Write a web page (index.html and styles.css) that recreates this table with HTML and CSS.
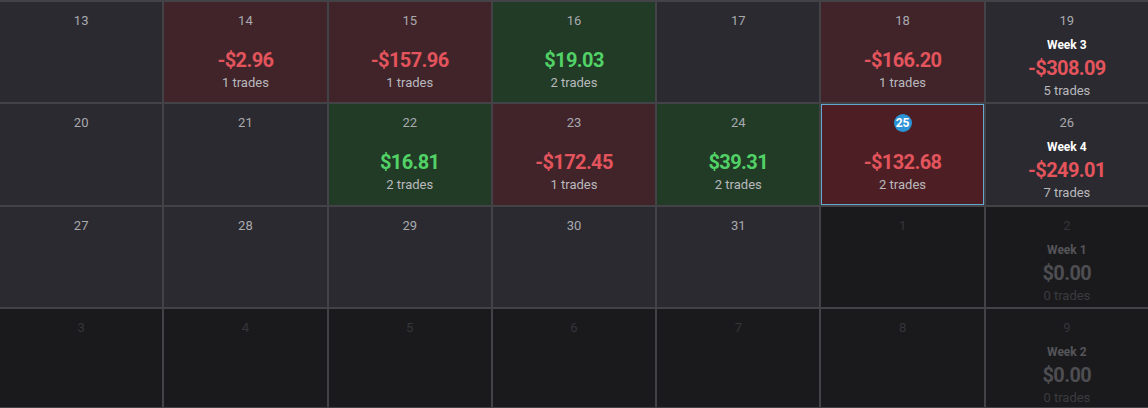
FILE: index.html
```html
<!DOCTYPE html>
<html>
<head>
<meta charset="utf-8">
<link rel="stylesheet" href="styles.css">
</head>
<body>
<div class="cal">
  <div class="cell"><div class="date">13</div></div>
  <div class="cell loss"><div class="date">14</div><div class="amt neg">-$2.96</div><div class="trades">1 trades</div></div>
  <div class="cell loss"><div class="date">15</div><div class="amt neg">-$157.96</div><div class="trades">1 trades</div></div>
  <div class="cell gain"><div class="date">16</div><div class="amt pos">$19.03</div><div class="trades">2 trades</div></div>
  <div class="cell"><div class="date">17</div></div>
  <div class="cell loss"><div class="date">18</div><div class="amt neg">-$166.20</div><div class="trades">1 trades</div></div>
  <div class="cell week"><div class="date">19</div><div class="wk">Week 3</div><div class="amt neg">-$308.09</div><div class="trades">5 trades</div></div>

  <div class="cell"><div class="date">20</div></div>
  <div class="cell"><div class="date">21</div></div>
  <div class="cell gain"><div class="date">22</div><div class="amt pos">$16.81</div><div class="trades">2 trades</div></div>
  <div class="cell loss"><div class="date">23</div><div class="amt neg">-$172.45</div><div class="trades">1 trades</div></div>
  <div class="cell gain"><div class="date">24</div><div class="amt pos">$39.31</div><div class="trades">2 trades</div></div>
  <div class="cell today"><div class="date"><span class="badge">25</span></div><div class="amt neg">-$132.68</div><div class="trades">2 trades</div></div>
  <div class="cell week"><div class="date">26</div><div class="wk">Week 4</div><div class="amt neg">-$249.01</div><div class="trades">7 trades</div></div>

  <div class="cell"><div class="date">27</div></div>
  <div class="cell"><div class="date">28</div></div>
  <div class="cell"><div class="date">29</div></div>
  <div class="cell"><div class="date">30</div></div>
  <div class="cell"><div class="date">31</div></div>
  <div class="cell out"><div class="date">1</div></div>
  <div class="cell out week"><div class="date">2</div><div class="wk">Week 1</div><div class="amt zero">$0.00</div><div class="trades">0 trades</div></div>

  <div class="cell out"><div class="date">3</div></div>
  <div class="cell out"><div class="date">4</div></div>
  <div class="cell out"><div class="date">5</div></div>
  <div class="cell out"><div class="date">6</div></div>
  <div class="cell out"><div class="date">7</div></div>
  <div class="cell out"><div class="date">8</div></div>
  <div class="cell out week"><div class="date">9</div><div class="wk">Week 2</div><div class="amt zero">$0.00</div><div class="trades">0 trades</div></div>
</div>
</body>
</html>
```

FILE: styles.css
```css
* { box-sizing: border-box; }
html, body { margin: 0; padding: 0; background: #1a1a1d; }
body { width: 1148px; height: 408px; overflow: hidden; font-family: Roboto, "Liberation Sans", sans-serif; }

.cal {
  display: grid;
  grid-template-columns: repeat(7, 1fr);
  grid-template-rows: 100px 101px 100px 1fr;
  gap: 2px;
  padding: 2px 0;
  height: 408px;
  background: #434347;
}

.cell {
  background: #2a2a30;
  display: flex;
  flex-direction: column;
  align-items: center;
  padding-top: 10px;
  min-width: 0;
}
.cell.loss { background: #40242a; }
.cell.gain { background: #213b27; }
.cell.today { background: #4d1f24; box-shadow: inset 0 0 0 1px #64a9cf; }
.cell.out { background: #1a1a1c; }

.date {
  height: 18px;
  line-height: 18px;
  font-size: 13px;
  color: #a9a9ae;
  display: flex;
  align-items: center;
  justify-content: center;
}
.out .date { color: #35353a; }

.badge {
  width: 18px;
  height: 18px;
  border-radius: 50%;
  background: #2b93d6;
  color: #ffffff;
  font-size: 12px;
  font-weight: 700;
  line-height: 18px;
  text-align: center;
}

.amt {
  margin-top: 18px;
  height: 24px;
  line-height: 24px;
  font-size: 20px;
  font-weight: 700;
  letter-spacing: -0.6px;
}
.amt.neg { color: #e3545c; }
.amt.pos { color: #52d266; }
.amt.zero { color: #4d4d52; }

.trades {
  margin-top: 2px;
  height: 18px;
  line-height: 18px;
  font-size: 13px;
  color: #b9b9bd;
}
.out .trades { color: #3a3a3e; }

.wk {
  margin-top: 7px;
  height: 16px;
  line-height: 16px;
  font-size: 12px;
  font-weight: 700;
  color: #ffffff;
}
.out .wk { color: #55555a; }
.week .amt { margin-top: 3px; }
```
